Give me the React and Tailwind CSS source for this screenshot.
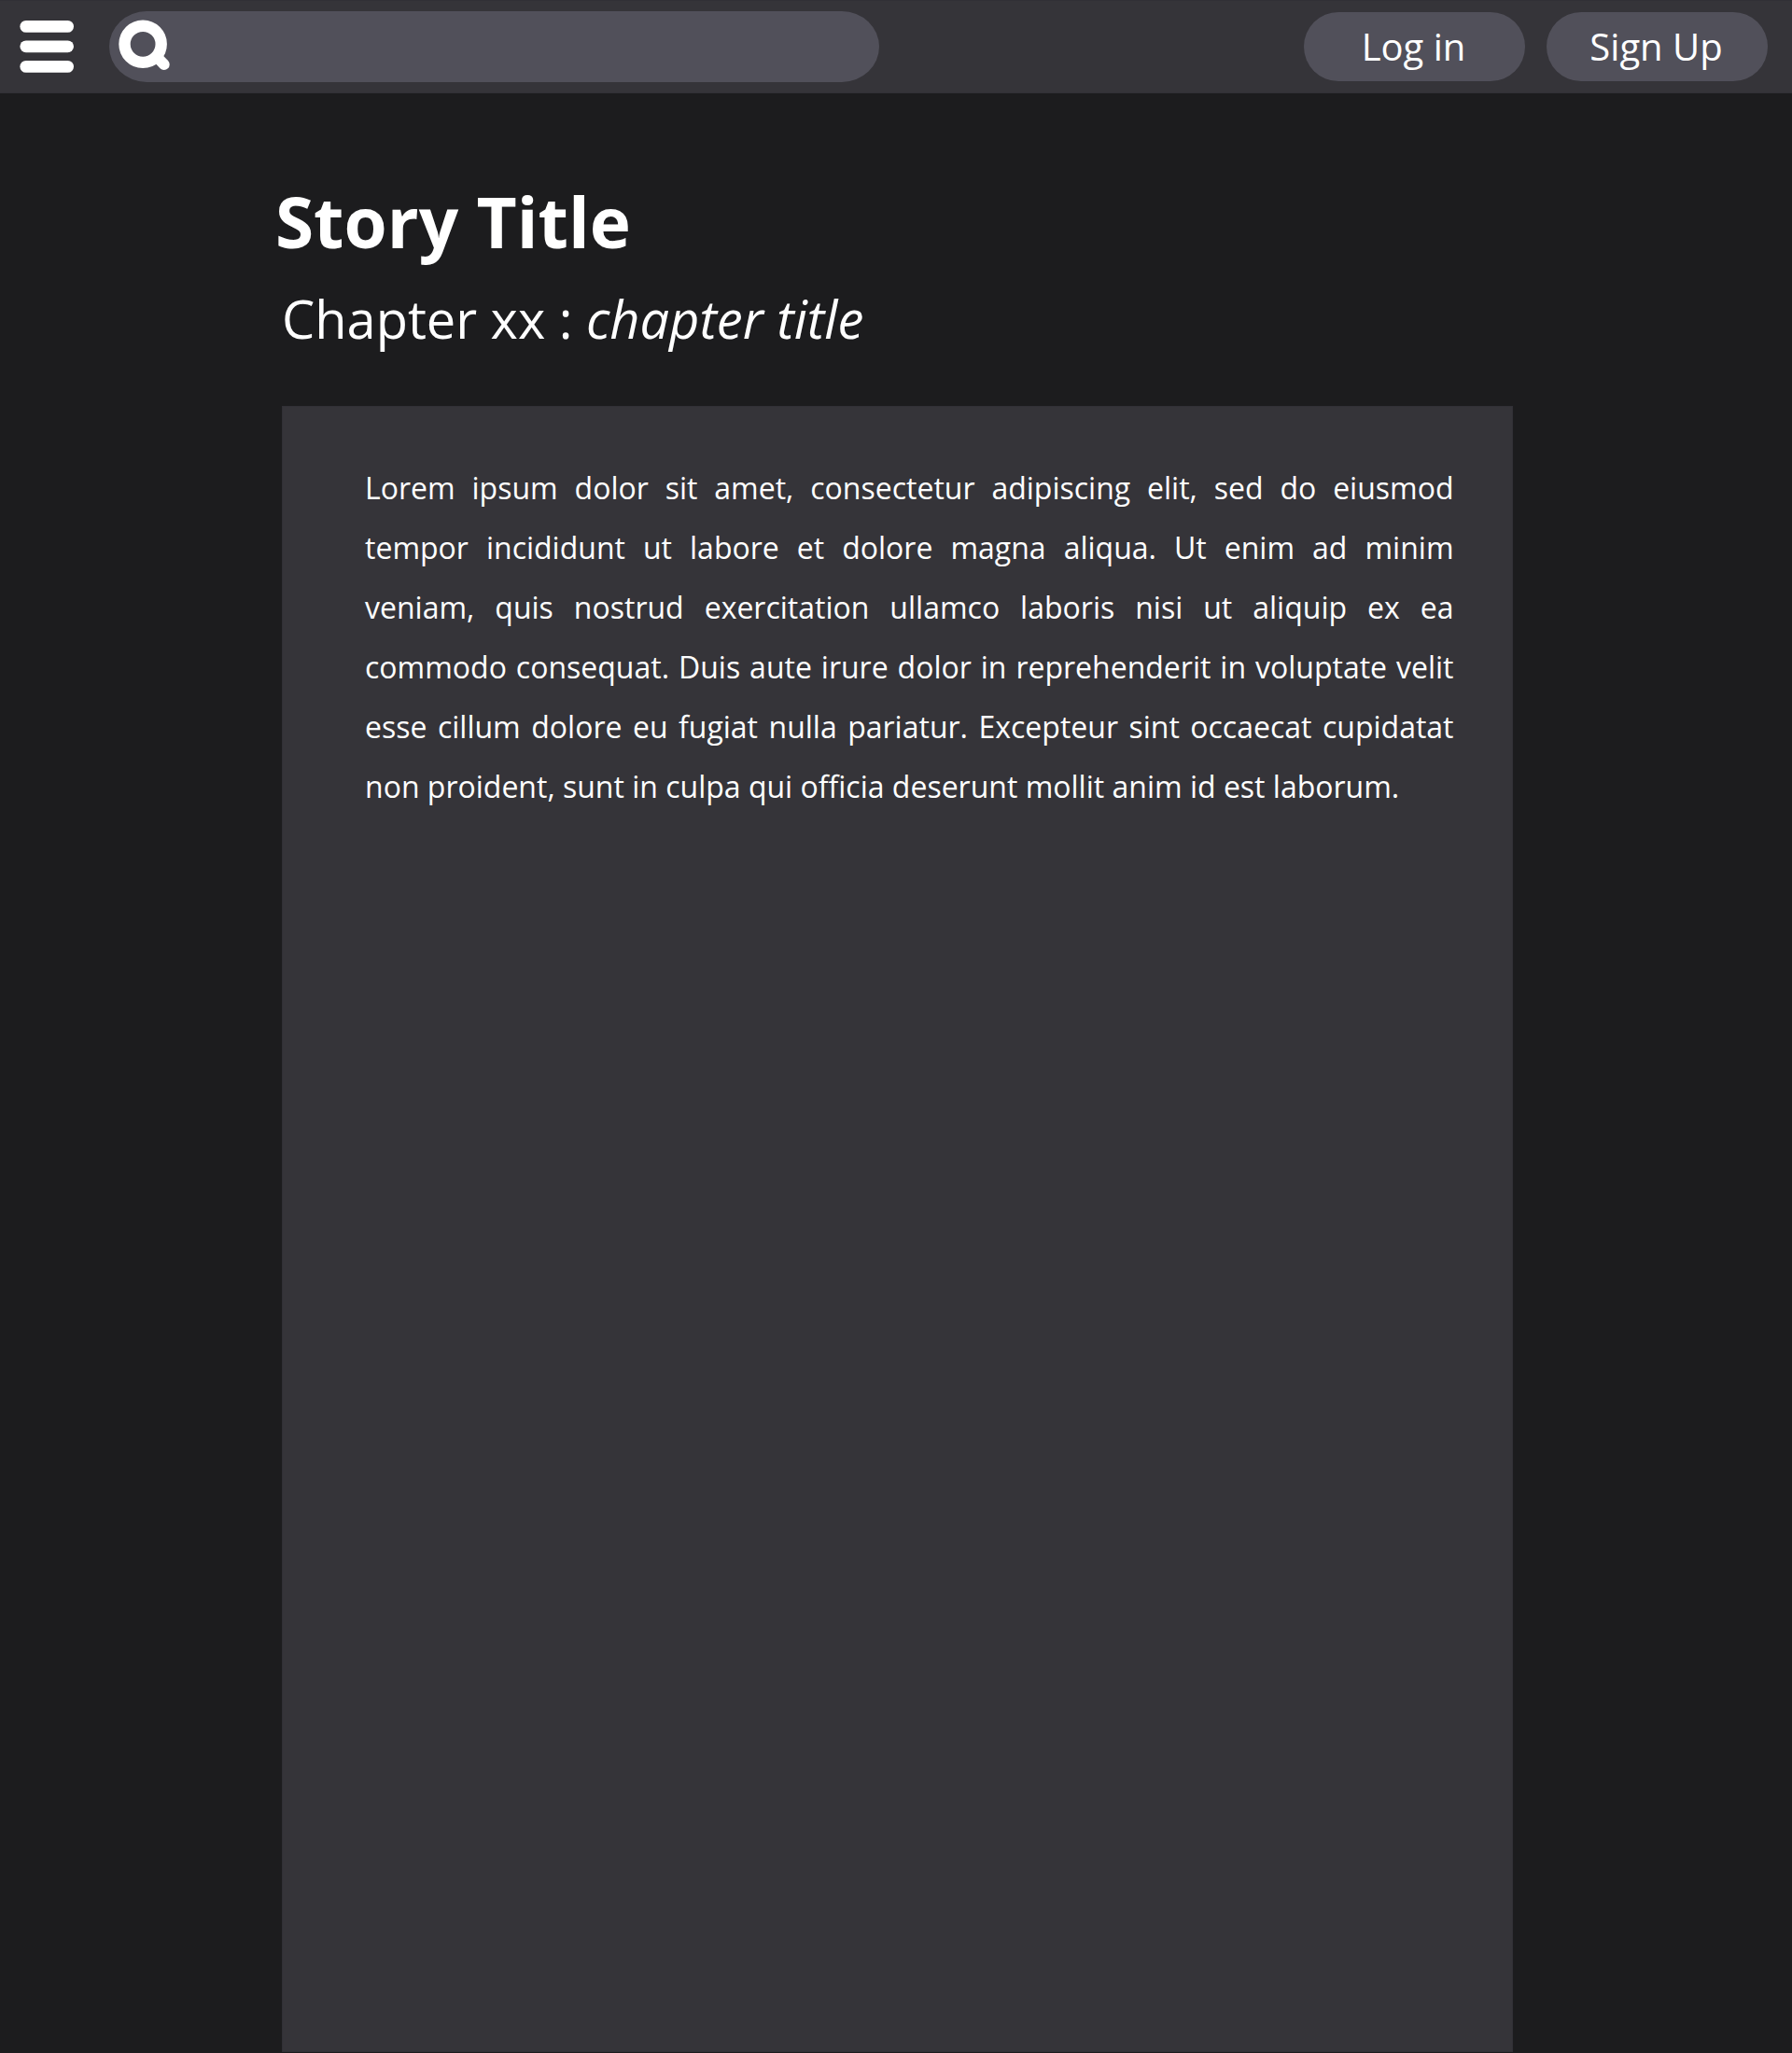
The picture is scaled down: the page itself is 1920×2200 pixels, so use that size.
function Header() {
  return (
    <header className="flex h-[100px] w-full items-center border-y border-[#313036] bg-[#353439] pl-[21px] pr-[26px]">
      <button aria-label="Menu" className="w-[58px]">
        <svg width="58" height="56" viewBox="0 0 58 56" fill="#fff" aria-hidden="true">
          <rect x="0.4" y="0" width="57.6" height="12.8" rx="6.4" />
          <rect x="0.4" y="21.4" width="57.6" height="12.8" rx="6.4" />
          <rect x="0.4" y="43" width="57.6" height="12.8" rx="6.4" />
        </svg>
      </button>
      <div className="ml-[38px] flex h-[76px] w-[825px] items-center rounded-[40px/38px] bg-[#51505a] pl-[9px]">
        <svg width="60" height="60" viewBox="0 0 60 60" fill="none" stroke="#fff" aria-hidden="true">
          <circle cx="27.1" cy="27.3" r="19.6" strokeWidth="12.4" />
          <path d="M42 41L49.8 49.1" strokeWidth="11.8" strokeLinecap="round" />
        </svg>
      </div>
      <nav className="ml-auto flex gap-[23px] text-[40px] leading-[74px] text-white">
        <button className="h-[74px] w-[237px] rounded-full bg-[#51505a] pr-[2px]">Log in</button>
        <button className="h-[74px] w-[237px] rounded-full bg-[#51505a] pr-[2px]">Sign Up</button>
      </nav>
    </header>
  );
}

export default function App() {
  return (
    <div className="flex h-[2200px] w-[1920px] flex-col bg-[#1c1c1e] font-['Open_Sans',sans-serif] text-white">
      <Header />
      <main className="ml-[302px] flex w-[1319px] grow flex-col pb-px">
        <h1 className="-ml-[7px] mt-[87px] text-[74.667px] font-bold leading-[100px]">Story Title</h1>
        <h2 className="mt-[14px] text-[56px] leading-[80px] tracking-[-0.03px]">
          Chapter xx : <em>chapter title</em>
        </h2>
        <article className="mt-[54px] grow border border-[#313036] bg-[#353439] pl-[88px] pr-[62.5px] pt-[55px]">
          <p className="text-justify text-[32px] leading-[64px]">
            Lorem ipsum dolor sit amet, consectetur adipiscing elit, sed do eiusmod tempor incididunt ut
            labore et dolore magna aliqua. Ut enim ad minim veniam, quis nostrud exercitation ullamco
            laboris nisi ut aliquip ex ea commodo consequat. Duis aute irure dolor in reprehenderit in
            voluptate velit esse cillum dolore eu fugiat nulla pariatur. Excepteur sint occaecat
            cupidatat non proident, sunt in culpa qui officia deserunt mollit anim id est laborum.
          </p>
        </article>
      </main>
    </div>
  );
}
